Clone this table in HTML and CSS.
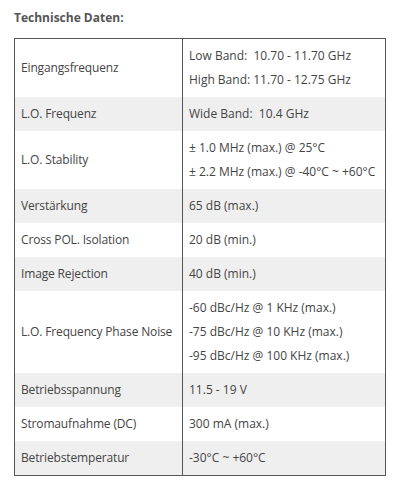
FILE: index.html
```html
<!DOCTYPE html>
<html>
<head>
<meta charset="utf-8">
<link rel="stylesheet" href="styles.css">
</head>
<body>
<div class="page">
  <h3 class="title">Technische Daten:</h3>
  <table class="spec">
    <tr><td class="k">Eingangsfrequenz</td><td class="v">Low Band:&nbsp; 10.70 - 11.70 GHz<br>High Band: 11.70 - 12.75 GHz</td></tr>
    <tr class="alt"><td class="k">L.O. Frequenz</td><td class="v">Wide Band:&nbsp; 10.4 GHz</td></tr>
    <tr><td class="k">L.O. Stability</td><td class="v">± 1.0 MHz (max.) @ 25°C<br>± 2.2 MHz (max.) @ -40°C ~ +60°C</td></tr>
    <tr class="alt"><td class="k">Verstärkung</td><td class="v">65 dB (max.)</td></tr>
    <tr><td class="k">Cross POL. Isolation</td><td class="v">20 dB (min.)</td></tr>
    <tr class="alt"><td class="k">Image Rejection</td><td class="v">40 dB (min.)</td></tr>
    <tr><td class="k">L.O. Frequency Phase Noise</td><td class="v">-60 dBc/Hz @ 1 KHz (max.)<br>-75 dBc/Hz @ 10 KHz (max.)<br>-95 dBc/Hz @ 100 KHz (max.)</td></tr>
    <tr class="alt"><td class="k">Betriebsspannung</td><td class="v">11.5 - 19 V</td></tr>
    <tr><td class="k">Stromaufnahme (DC)</td><td class="v">300 mA (max.)</td></tr>
    <tr class="alt"><td class="k">Betriebstemperatur</td><td class="v">-30°C ~ +60°C</td></tr>
  </table>
</div>
</body>
</html>
```
FILE: styles.css
```css
html, body {
  margin: 0;
  padding: 0;
  background: #fff;
}
.page {
  padding: 9px 14px;
  font-family: "Open Sans", "Noto Sans", sans-serif;
  color: #444;
}
.title {
  margin: 0 0 11px 0;
  font-size: 12px;
  font-weight: bold;
  line-height: 18px;
  color: #555;
}
.spec {
  border-collapse: collapse;
  border: 1px solid #555;
  width: 372px;
  font-size: 12px;
}
.spec td {
  padding: 5px 6px;
  line-height: 24px;
  vertical-align: middle;
  text-align: left;
}
.spec td.k {
  width: 155px;
  white-space: nowrap;
  letter-spacing: -0.15px;
  border-right: 1px solid #555;
}
.spec td.v {
  white-space: nowrap;
}
.spec tr.alt td {
  background: #efefef;
}
```
